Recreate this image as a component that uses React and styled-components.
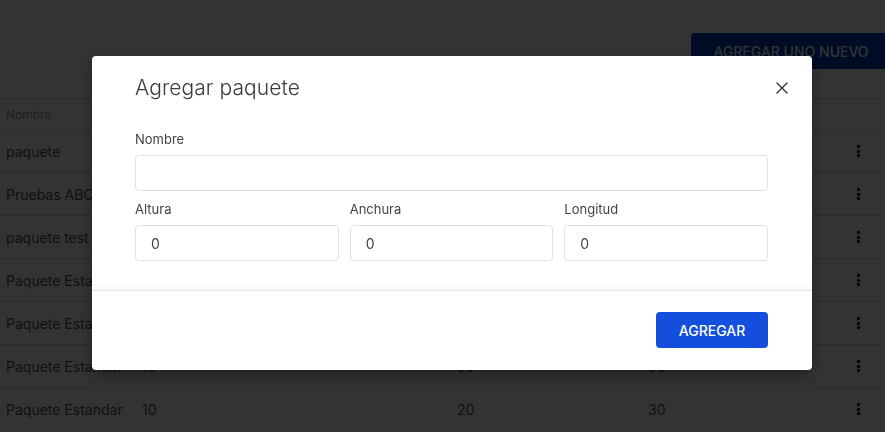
import React from "react";
import styled, { createGlobalStyle } from "styled-components";

const GlobalStyle = createGlobalStyle`
  html, body { margin: 0; padding: 0; background: #fff; overflow: hidden; }
  body { font-family: Inter, "Noto Sans", Arial, sans-serif; }
  * { box-sizing: border-box; }
`;

const Page = styled.div`
  width: 885px;
  height: 432px;
  display: flex;
  flex-direction: column;
`;

const Toolbar = styled.div`
  height: 98px;
  display: flex;
  align-items: center;
  justify-content: flex-end;
  padding-top: 4px;
  margin-right: -6px;
`;

const PrimaryButton = styled.button`
  width: 200px;
  height: 36px;
  border: none;
  border-radius: 4px;
  background: ${(p) => p.$bg || "#003cbe"};
  color: #fff;
  font-family: Inter, Arial, sans-serif;
  font-size: 14px;
  font-weight: 500;
  letter-spacing: 0;
  text-transform: uppercase;
  cursor: pointer;
`;

const Row = styled.div`
  display: grid;
  grid-template-columns: 136px 315px 191px 1fr 28px;
  align-items: center;
  height: ${(p) => (p.$head ? "31px" : "43px")};
  padding: 0 25px 0 6px;
  border-top: 1px solid #d9d9d9;
  font-size: ${(p) => (p.$head ? "12px" : "14px")};
  color: ${(p) => (p.$head ? "#999" : "#555")};
`;

const Dots = styled.div`
  display: flex;
  flex-direction: column;
  align-items: center;
  gap: 1.5px;
  justify-self: end;
  & > span {
    width: 3px;
    height: 3px;
    background: #000;
    border-radius: 1px;
  }
`;

const Overlay = styled.div`
  position: fixed;
  inset: 0;
  background: rgba(0, 0, 0, 0.8);
  display: flex;
  align-items: flex-start;
  padding: 56px 0 0 92px;
`;

const Modal = styled.div`
  width: 720px;
  background: #fff;
  border-radius: 4px;
  box-shadow: 0 6px 16px rgba(0, 0, 0, 0.35);
  display: flex;
  flex-direction: column;
`;

const ModalBody = styled.div`
  padding: 18px 44px 29px 43px;
  display: flex;
  flex-direction: column;
`;

const ModalHeader = styled.div`
  display: flex;
  align-items: center;
  justify-content: space-between;
  height: 28px;
  margin-bottom: 29px;
`;

const Title = styled.h2`
  margin: 0;
  font-size: 21px;
  font-weight: 300;
  color: #3c3c3c;
  line-height: 28px;
  letter-spacing: 0.1px;
`;

const CloseButton = styled.button`
  border: none;
  background: none;
  padding: 0;
  width: 14px;
  height: 14px;
  margin-right: -21px;
  display: flex;
  align-items: center;
  justify-content: center;
  cursor: pointer;
`;

const Field = styled.label`
  display: flex;
  flex-direction: column;
  gap: 8px;
  min-width: 0;
`;

const Label = styled.span`
  font-size: 13px;
  line-height: 16px;
  color: #444;
`;

const Input = styled.input`
  height: 36px;
  width: 100%;
  border: 1px solid #e2e2e2;
  border-radius: 4px;
  padding: 0 15px;
  font-family: Inter, Arial, sans-serif;
  font-size: 14px;
  color: #444;
  outline: none;
`;

const FieldRow = styled.div`
  display: grid;
  grid-template-columns: 1fr 1fr 1fr;
  gap: 11px;
  margin-top: 10px;
`;

const Footer = styled.div`
  border-top: 1px solid #e4e4e4;
  box-shadow: 0 -3px 5px rgba(0, 0, 0, 0.03);
  padding: 21px 44px 22px 43px;
  display: flex;
  justify-content: flex-end;
`;

const SubmitButton = styled(PrimaryButton)`
  width: 112px;
  background: #134fdc;
`;

const rows = [
  "paquete",
  "Pruebas ABC",
  "paquete test",
  "Paquete Estandar",
  "Paquete Estandar",
  "Paquete Estandar",
  "Paquete Estandar",
];

export default function App() {
  return (
    <>
      <GlobalStyle />
      <Page>
        <Toolbar>
          <PrimaryButton>Agregar uno nuevo</PrimaryButton>
        </Toolbar>
        <Row $head>
          <span>Nombre</span>
          <span>Altura</span>
          <span>Anchura</span>
          <span>Longitud</span>
          <span />
        </Row>
        {rows.map((name, i) => (
          <Row key={i}>
            <span>{name}</span>
            <span>10</span>
            <span>20</span>
            <span>30</span>
            <Dots>
              <span />
              <span />
              <span />
            </Dots>
          </Row>
        ))}
      </Page>
      <Overlay>
        <Modal>
          <ModalBody>
            <ModalHeader>
              <Title>Agregar paquete</Title>
              <CloseButton aria-label="Cerrar">
                <svg width="12" height="12" viewBox="0 0 12 12">
                  <path d="M1 1 L11 11 M11 1 L1 11" stroke="#2d3142" strokeWidth="1.4" strokeLinecap="round" />
                </svg>
              </CloseButton>
            </ModalHeader>
            <Field>
              <Label>Nombre</Label>
              <Input defaultValue="" />
            </Field>
            <FieldRow>
              <Field>
                <Label>Altura</Label>
                <Input defaultValue="0" />
              </Field>
              <Field>
                <Label>Anchura</Label>
                <Input defaultValue="0" />
              </Field>
              <Field>
                <Label>Longitud</Label>
                <Input defaultValue="0" />
              </Field>
            </FieldRow>
          </ModalBody>
          <Footer>
            <SubmitButton>Agregar</SubmitButton>
          </Footer>
        </Modal>
      </Overlay>
    </>
  );
}
